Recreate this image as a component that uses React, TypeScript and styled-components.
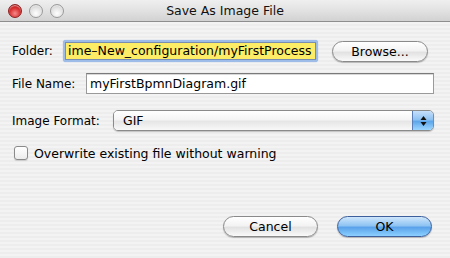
import React from "react";
import styled, { createGlobalStyle } from "styled-components";

const Global = createGlobalStyle`
  html, body { margin: 0; padding: 0; }
  body {
    width: 450px; height: 258px; overflow: hidden;
    font-family: "DejaVu Sans", "Liberation Sans", sans-serif;
    font-size: 12px; color: #000;
  }
`;

const Window = styled.div`
  width: 450px; height: 258px;
  display: flex; flex-direction: column;
  background: repeating-linear-gradient(to bottom, #ededed 0px, #ededed 2px, #f3f3f3 2px, #f3f3f3 4px);
`;

const TitleBar = styled.div`
  height: 21px;
  border-bottom: 1px solid #8e8e8e;
  background: linear-gradient(to bottom, #efefef 0%, #e2e2e2 50%, #d2d2d2 100%);
  display: flex; align-items: center;
  position: relative;
  padding-left: 8px;
  gap: 7px;
`;

const Light = styled.div<{ $red?: boolean }>`
  width: 14px; height: 14px; border-radius: 50%;
  box-sizing: border-box;
  border: 1px solid ${p => (p.$red ? "#8b1f1f" : "#9a9a9a")};
  background: ${p =>
    p.$red
      ? "radial-gradient(circle at 50% 70%, #f58a8a 0%, #d62a2a 55%, #9e1010 100%)"
      : "radial-gradient(circle at 50% 70%, #ffffff 0%, #e2e2e2 55%, #b9b9b9 100%)"};
  box-shadow: inset 0 1px 1px rgba(255,255,255,0.6);
`;

const Title = styled.div`
  position: absolute; left: 0; right: 0; top: 0; bottom: 0;
  display: flex; align-items: center; justify-content: center;
  font-size: 12.5px; color: #111;
  pointer-events: none;
`;

const Content = styled.div`
  flex: 1;
  display: flex; flex-direction: column;
  padding: 18px 16px 21px 12px;
`;

const Row = styled.div<{ $mt?: number; $h?: number }>`
  display: flex; align-items: center;
  height: ${p => p.$h ?? 22}px;
  margin-top: ${p => p.$mt ?? 0}px;
`;

const Label = styled.span<{ $w: number }>`
  width: ${p => p.$w}px; flex: none;
  white-space: nowrap;
`;

const FocusField = styled.div`
  box-sizing: border-box;
  width: 255px; height: 22px;
  border-radius: 3px;
  padding: 2px;
  background: #9dbde8;
  box-shadow: 0 0 1px #7aa0d6;
`;

const YellowInput = styled.div`
  box-sizing: border-box;
  height: 18px; width: 100%;
  background: #fdec66;
  border: 1px solid #7a8fb0;
  padding: 0 0 0 2px;
  line-height: 16px;
  font-size: 12.5px;
  white-space: nowrap; overflow: hidden;
`;

const TextInput = styled.div`
  box-sizing: border-box;
  flex: 1; height: 21px;
  background: #fff;
  border: 1px solid #9a9a9a;
  border-top-color: #7a7a7a;
  box-shadow: inset 0 1px 0 #d8d8d8;
  padding-left: 3px;
  line-height: 19px;
  font-size: 12.5px;
`;

const PillButton = styled.div<{ $w: number; $primary?: boolean; $ml?: number }>`
  box-sizing: border-box;
  width: ${p => p.$w}px; height: 21px;
  margin-left: ${p => p.$ml ?? 0}px;
  border-radius: 11px;
  border: 1px solid ${p => (p.$primary ? "#3d5f9c" : "#8a8a8a")};
  background: ${p =>
    p.$primary
      ? "linear-gradient(to bottom, #cfe6fb 0%, #8fc4f3 45%, #5aa2ea 55%, #8cd0ff 100%)"
      : "linear-gradient(to bottom, #ffffff 0%, #f3f3f3 45%, #e2e2e2 55%, #fafafa 100%)"};
  box-shadow: 0 1px 1px rgba(0,0,0,0.25);
  display: flex; align-items: center; justify-content: center;
  font-size: 12.5px;
`;

const Select = styled.div`
  box-sizing: border-box;
  flex: 1; height: 21px;
  display: flex;
  border: 1px solid #8a8a8a;
  border-radius: 5px;
  overflow: hidden;
  box-shadow: 0 1px 1px rgba(0,0,0,0.2);
`;

const SelectBody = styled.div`
  flex: 1;
  background: linear-gradient(to bottom, #ffffff 0%, #f4f4f4 45%, #e6e6e6 55%, #f8f8f8 100%);
  padding-left: 9px;
  line-height: 19px;
  font-size: 12.5px;
`;

const SelectCap = styled.div`
  width: 20px;
  border-left: 1px solid #5a7fb8;
  background: linear-gradient(to bottom, #c6e0fa 0%, #8ec2f2 45%, #5ea6ea 55%, #9bd6ff 100%);
  display: flex; align-items: center; justify-content: center;
`;

const CheckRow = styled.label`
  display: flex; align-items: center; gap: 6px;
  height: 14px; margin-top: 15px;
  padding-left: 2px;
  font-size: 12.5px;
`;

const Box = styled.span`
  box-sizing: border-box;
  width: 14px; height: 14px;
  border: 1px solid #8a8a8a;
  border-radius: 3px;
  background: linear-gradient(to bottom, #ffffff 0%, #ececec 100%);
  box-shadow: 0 1px 1px rgba(0,0,0,0.15);
`;

const Footer = styled.div`
  margin-top: auto;
  display: flex; justify-content: flex-end;
  padding-right: 2px;
`;

export default function App() {
  return (
    <>
      <Global />
      <Window>
        <TitleBar>
          <Light $red />
          <Light />
          <Light />
          <Title>Save As Image File</Title>
        </TitleBar>
        <Content>
          <Row $h={22}>
            <Label $w={51}>Folder:</Label>
            <FocusField>
              <YellowInput>ime–New_configuration/myFirstProcess</YellowInput>
            </FocusField>
            <PillButton $w={96} $ml={14}>Browse...</PillButton>
          </Row>
          <Row $mt={11} $h={21}>
            <Label $w={74}>File Name:</Label>
            <TextInput>myFirstBpmnDiagram.gif</TextInput>
          </Row>
          <Row $mt={16} $h={21}>
            <Label $w={101}>Image Format:</Label>
            <Select>
              <SelectBody>GIF</SelectBody>
              <SelectCap>
                <svg width="7" height="12" viewBox="0 0 7 12">
                  <polygon points="3.5,1 6.5,5 0.5,5" fill="#111" />
                  <polygon points="0.5,7 6.5,7 3.5,11" fill="#111" />
                </svg>
              </SelectCap>
            </Select>
          </Row>
          <CheckRow>
            <Box />
            <span>Overwrite existing file without warning</span>
          </CheckRow>
          <Footer>
            <PillButton $w={95}>Cancel</PillButton>
            <PillButton $w={95} $primary $ml={19}>OK</PillButton>
          </Footer>
        </Content>
      </Window>
    </>
  );
}
